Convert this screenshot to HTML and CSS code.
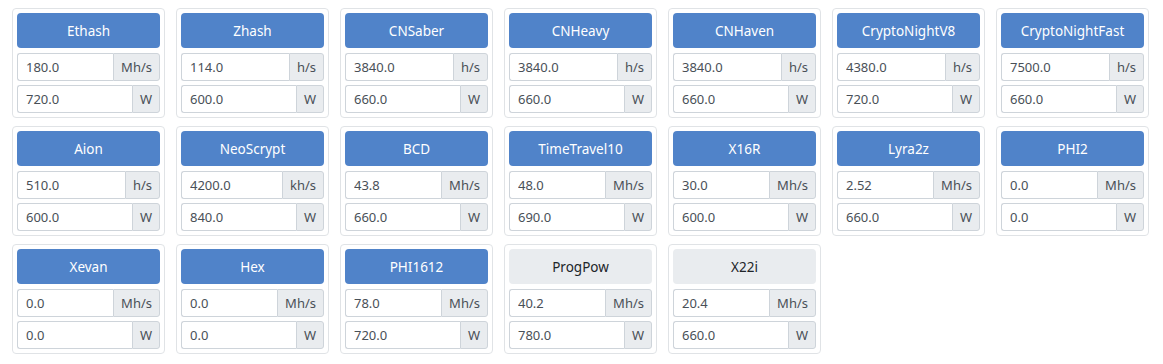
FILE: index.html
```html
<!DOCTYPE html>
<html lang="en">
<head>
    <meta charset="UTF-8">
    <title>Algorithms</title>
    <link rel="stylesheet" href="styles.css">
</head>
<body>
    <div class="algo-grid" id="algoGrid"></div>

    <script>
        // hashrate / power defaults per algorithm
        const algos = [
            ['Ethash', '180.0', 'Mh/s', '720.0', true],
            ['Zhash', '114.0', 'h/s', '600.0', true],
            ['CNSaber', '3840.0', 'h/s', '660.0', true],
            ['CNHeavy', '3840.0', 'h/s', '660.0', true],
            ['CNHaven', '3840.0', 'h/s', '660.0', true],
            ['CryptoNightV8', '4380.0', 'h/s', '720.0', true],
            ['CryptoNightFast', '7500.0', 'h/s', '660.0', true],
            ['Aion', '510.0', 'h/s', '600.0', true],
            ['NeoScrypt', '4200.0', 'kh/s', '840.0', true],
            ['BCD', '43.8', 'Mh/s', '660.0', true],
            ['TimeTravel10', '48.0', 'Mh/s', '690.0', true],
            ['X16R', '30.0', 'Mh/s', '600.0', true],
            ['Lyra2z', '2.52', 'Mh/s', '660.0', true],
            ['PHI2', '0.0', 'Mh/s', '0.0', true],
            ['Xevan', '0.0', 'Mh/s', '0.0', true],
            ['Hex', '0.0', 'Mh/s', '0.0', true],
            ['PHI1612', '78.0', 'Mh/s', '720.0', true],
            ['ProgPow', '40.2', 'Mh/s', '780.0', false],
            ['X22i', '20.4', 'Mh/s', '660.0', false]
        ];

        const grid = document.getElementById('algoGrid');
        algos.forEach(([name, rate, unit, power, active]) => {
            const card = document.createElement('div');
            card.className = 'algo-card';
            card.innerHTML = `
                <button class="algo-btn ${active ? 'active' : ''}">${name}</button>
                <div class="input-group">
                    <input type="text" value="${rate}">
                    <span class="addon">${unit}</span>
                </div>
                <div class="input-group">
                    <input type="text" value="${power}">
                    <span class="addon">W</span>
                </div>`;
            grid.appendChild(card);
        });
    </script>
</body>
</html>
```

FILE: styles.css
```css
* {
    margin: 0;
    padding: 0;
    box-sizing: border-box;
    font-family: 'Noto Sans', 'Open Sans', sans-serif;
}

body {
    background-color: white;
    padding: 8px 0 0 12px;
}

.algo-grid {
    display: grid;
    grid-template-columns: repeat(7, 153px);
    column-gap: 11px;
    row-gap: 8px;
}

.algo-card {
    height: 110px;
    border: 1px solid #e0e3e6;
    border-radius: 4px;
    padding: 4px;
    display: flex;
    flex-direction: column;
    gap: 4px;
}

.algo-btn {
    height: 35px;
    margin-bottom: 1px;
    border: none;
    border-radius: 4px;
    background-color: #e9ecef;
    color: #212529;
    font-size: 13.5px;
    cursor: pointer;
}

.algo-btn.active {
    background-color: #5083c9;
    color: white;
}

.input-group {
    display: flex;
    height: 28px;
}

.input-group input {
    flex: 1;
    min-width: 0;
    border: 1px solid #ced4da;
    border-right: none;
    border-radius: 3px 0 0 3px;
    padding: 0 8px;
    font-size: 13px;
    color: #495057;
    background-color: white;
}

.input-group input:focus {
    outline: none;
    border-color: #80bdff;
}

.addon {
    display: flex;
    align-items: center;
    padding: 0 7px;
    border: 1px solid #ced4da;
    border-radius: 0 3px 3px 0;
    background-color: #e9ecef;
    color: #495057;
    font-size: 13px;
}
```
